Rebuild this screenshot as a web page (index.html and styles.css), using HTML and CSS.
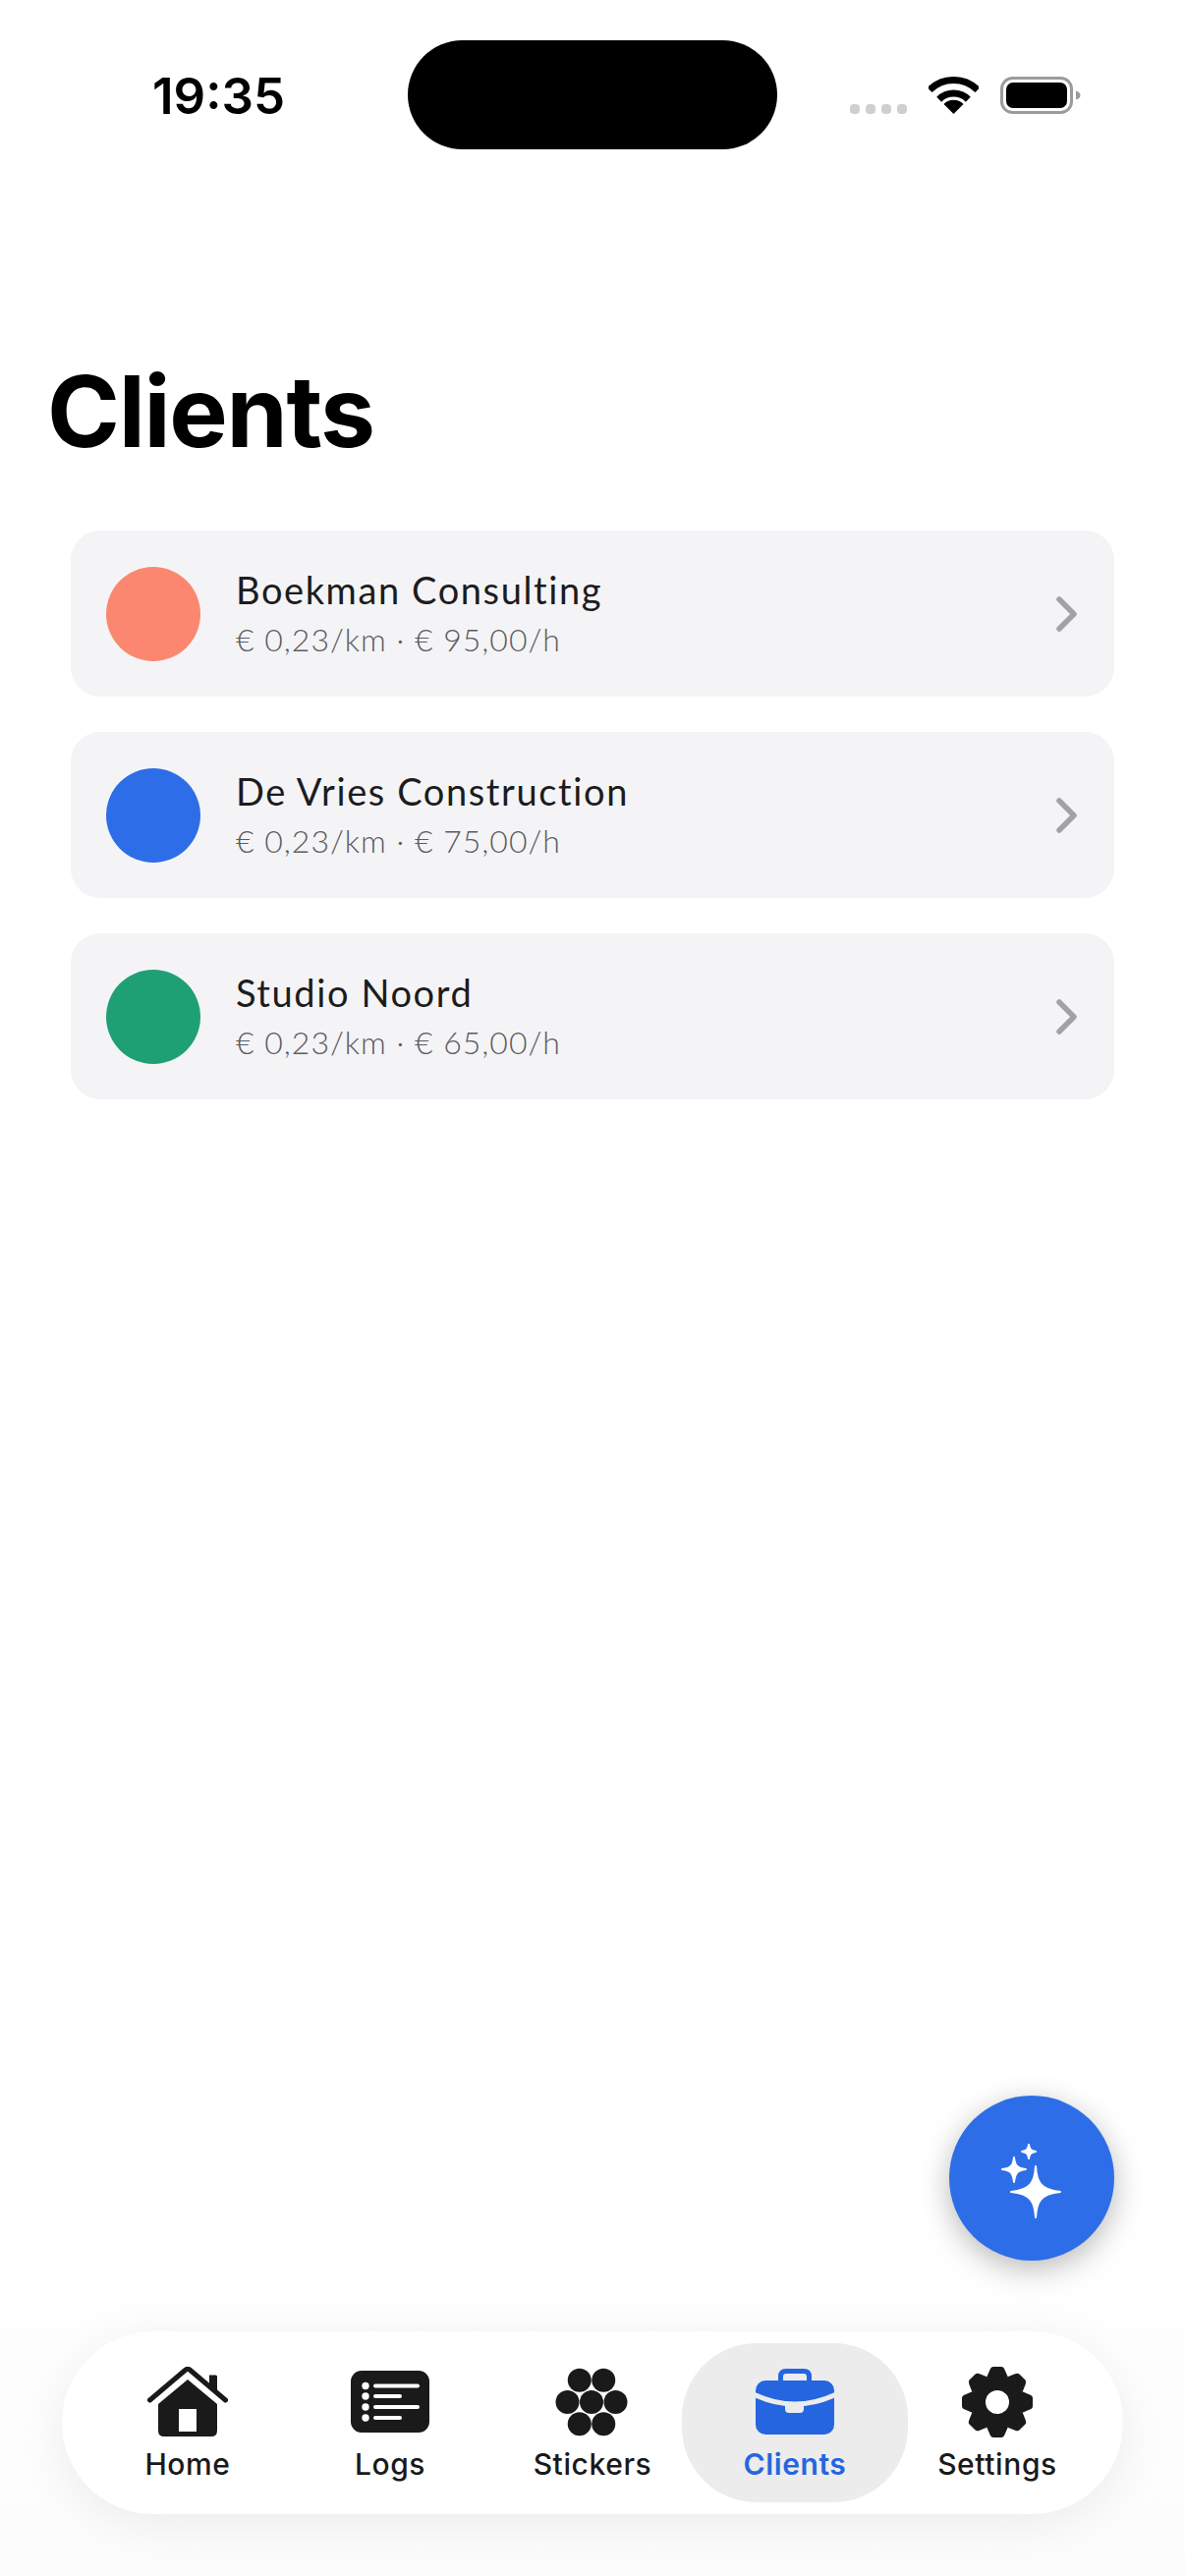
FILE: index.html
```html
<!DOCTYPE html>
<html lang="en">
  <head>
      <meta charset="UTF-8">
      <meta name="viewport" content="width=device-width, initial-scale=1.0">
      <title>Clients</title>
      <link rel="stylesheet" href="styles.css">
  </head>
  <body>
      <div class="phone">
          <header class="status">
              <div class="status-left"><span class="time">19:35</span></div>
              <div class="island"></div>
              <div class="status-right">
                  <div class="dots"><i></i><i></i><i></i><i></i></div>
                  <svg class="wifi" width="51" height="38" viewBox="0 0 51 38">
                      <path d="M1.1 13.6A34.5 34.5 0 0 1 49.9 13.6" fill="none" stroke="#000" stroke-width="7"/>
                      <path d="M10.7 23.2A21 21 0 0 1 40.3 23.2" fill="none" stroke="#000" stroke-width="7"/>
                      <path d="M25.5 38L15.5 28A14 14 0 0 1 35.5 28Z" fill="#000"/>
                  </svg>
                  <svg class="battery" width="82" height="38" viewBox="0 0 82 38">
                      <rect x="1.5" y="1.5" width="71" height="35" rx="11" fill="none" stroke="#9b9b9b" stroke-width="3"/>
                      <rect x="6" y="6" width="62" height="26" rx="7" fill="#000"/>
                      <path d="M77 14.5C80 15.5 81.5 17 81.5 19C81.5 21 80 22.5 77 23.5Z" fill="#9b9b9b"/>
                  </svg>
              </div>
          </header>

          <h1 class="title">Clients</h1>

          <main class="clients">
              <div class="card">
                  <span class="dot dot-coral"></span>
                  <div class="info">
                      <div class="name">Boekman Consulting</div>
                      <div class="rate">€ 0,23/km · € 95,00/h</div>
                  </div>
                  <svg class="chev" width="23" height="38" viewBox="0 0 23 38"><path d="M4 4L19 19L4 34" fill="none" stroke="#a1a1a6" stroke-width="5.5" stroke-linecap="round" stroke-linejoin="round"/></svg>
              </div>
              <div class="card">
                  <span class="dot dot-blue"></span>
                  <div class="info">
                      <div class="name">De Vries Construction</div>
                      <div class="rate">€ 0,23/km · € 75,00/h</div>
                  </div>
                  <svg class="chev" width="23" height="38" viewBox="0 0 23 38"><path d="M4 4L19 19L4 34" fill="none" stroke="#a1a1a6" stroke-width="5.5" stroke-linecap="round" stroke-linejoin="round"/></svg>
              </div>
              <div class="card">
                  <span class="dot dot-green"></span>
                  <div class="info">
                      <div class="name">Studio Noord</div>
                      <div class="rate">€ 0,23/km · € 65,00/h</div>
                  </div>
                  <svg class="chev" width="23" height="38" viewBox="0 0 23 38"><path d="M4 4L19 19L4 34" fill="none" stroke="#a1a1a6" stroke-width="5.5" stroke-linecap="round" stroke-linejoin="round"/></svg>
              </div>
          </main>

          <button class="fab" type="button" aria-label="Assistant">
              <svg width="84" height="84" viewBox="0 0 84 84" fill="#fff" stroke="#fff" stroke-width="2" stroke-linejoin="round">
                  <path d="M46 30C47 45 50 54 71 56C50 58 47 67 46 82C45 67 42 58 21 56C42 54 45 45 46 30Z"/>
                  <path d="M24 21C25 29 27 32 36 33C27 34 25 37 24 46C23 37 21 34 12 33C21 32 23 29 24 21Z"/>
                  <path d="M39 8C39.6 12.5 41 14.3 46 15C41 15.7 39.6 17.5 39 22C38.4 17.5 37 15.7 32 15C37 14.3 38.4 12.5 39 8Z"/>
              </svg>
          </button>

          <nav class="tabbar">
              <a class="tab">
                  <svg width="82" height="72" viewBox="0 0 82 72">
                      <path d="M63 8.5H69.5Q71 8.5 71 10V27L63 20Z" fill="#1a1a1a"/>
                      <path d="M2.5 34L39 3Q41 1.5 43 3L79.5 34" fill="none" stroke="#1a1a1a" stroke-width="5" stroke-linecap="round" stroke-linejoin="round"/>
                      <path fill-rule="evenodd" d="M41 13L71 38V65Q71 71 65 71H17Q11 71 11 65V38ZM32 43V66H50V43Z" fill="#1a1a1a"/>
                  </svg>
                  <span>Home</span>
              </a>
              <a class="tab">
                  <svg width="80" height="64" viewBox="0 0 80 64">
                      <rect width="80" height="63" rx="11" fill="#1a1a1a"/>
                      <g fill="#fff">
                          <circle cx="15" cy="15.5" r="3.7"/>
                          <circle cx="15" cy="26" r="3.7"/>
                          <circle cx="15" cy="37" r="3.7"/>
                          <circle cx="15" cy="48" r="3.7"/>
                      </g>
                      <g stroke="#fff" stroke-width="4" stroke-linecap="round">
                          <path d="M25 15.5H68"/>
                          <path d="M25 26H50"/>
                          <path d="M25 37H68"/>
                          <path d="M25 48H50"/>
                      </g>
                  </svg>
                  <span>Logs</span>
              </a>
              <a class="tab">
                  <svg class="tab-stickers" width="74" height="68" viewBox="0 0 74 68" fill="#1a1a1a">
                      <circle cx="24.75" cy="11.8" r="12"/>
                      <circle cx="49.25" cy="11.8" r="12"/>
                      <circle cx="12.5" cy="34" r="12"/>
                      <circle cx="37" cy="34" r="12"/>
                      <circle cx="61.5" cy="34" r="12"/>
                      <circle cx="24.75" cy="56.2" r="12"/>
                      <circle cx="49.25" cy="56.2" r="12"/>
                  </svg>
                  <span>Stickers</span>
              </a>
              <a class="tab active">
                  <svg width="80" height="68" viewBox="0 0 80 68">
                      <path d="M25.5 13V8Q25.5 2.5 31 2.5H49Q54.5 2.5 54.5 8V13" fill="none" stroke="#2566e0" stroke-width="5"/>
                      <rect y="12" width="80" height="55" rx="10" fill="#2566e0"/>
                      <path d="M-2 26Q40 46 82 26" fill="none" stroke="#ececec" stroke-width="5"/>
                      <rect x="30" y="34" width="19" height="11" rx="4" fill="#ececec"/>
                  </svg>
                  <span>Clients</span>
              </a>
              <a class="tab">
                  <svg width="72" height="72" viewBox="-36 -36 72 72" fill="#1a1a1a">
                      <circle r="27"/>
                      <path d="M-11 -25L-7.5 -33Q-6.5 -36 -4 -36H4Q6.5 -36 7.5 -33L11 -25Z"/>
                      <path transform="rotate(45)" d="M-11 -25L-7.5 -33Q-6.5 -36 -4 -36H4Q6.5 -36 7.5 -33L11 -25Z"/>
                      <path transform="rotate(90)" d="M-11 -25L-7.5 -33Q-6.5 -36 -4 -36H4Q6.5 -36 7.5 -33L11 -25Z"/>
                      <path transform="rotate(135)" d="M-11 -25L-7.5 -33Q-6.5 -36 -4 -36H4Q6.5 -36 7.5 -33L11 -25Z"/>
                      <path transform="rotate(180)" d="M-11 -25L-7.5 -33Q-6.5 -36 -4 -36H4Q6.5 -36 7.5 -33L11 -25Z"/>
                      <path transform="rotate(225)" d="M-11 -25L-7.5 -33Q-6.5 -36 -4 -36H4Q6.5 -36 7.5 -33L11 -25Z"/>
                      <path transform="rotate(270)" d="M-11 -25L-7.5 -33Q-6.5 -36 -4 -36H4Q6.5 -36 7.5 -33L11 -25Z"/>
                      <path transform="rotate(315)" d="M-11 -25L-7.5 -33Q-6.5 -36 -4 -36H4Q6.5 -36 7.5 -33L11 -25Z"/>
                      <circle r="12" fill="#fff"/>
                  </svg>
                  <span>Settings</span>
              </a>
          </nav>
      </div>
  </body>
</html>
```

FILE: styles.css
```css
* {
    box-sizing: border-box;
}
body {
    margin: 0;
    background: #fff;
    font-family: Inter, "Liberation Sans", sans-serif;
}
.phone {
    width: 1206px;
    height: 2622px;
    display: flex;
    flex-direction: column;
    overflow: hidden;
    background: linear-gradient(#fff 85%, #fcfcfc);
}

/* status bar */
.status {
    display: flex;
    align-items: center;
    padding-top: 41px;
}
.status-left {
    width: 415px;
    padding: 2px 0 0 155px;
}
.time {
    font-size: 51px;
    font-weight: 600;
    color: #000;
}
.island {
    width: 376px;
    height: 111px;
    border-radius: 56px;
    background: #000;
}
.status-right {
    display: flex;
    align-items: flex-end;
    margin-left: 74px;
}
.dots {
    display: flex;
    gap: 6px;
}
.dots i {
    width: 10px;
    height: 10px;
    border-radius: 4px;
    background: #cfcfcf;
}
.wifi {
    margin-left: 22px;
}
.battery {
    margin-left: 22px;
}

/* heading */
.title {
    margin: 207px 0 0 48px;
    font-size: 100px;
    line-height: 120px;
    font-weight: 700;
    letter-spacing: -1.3px;
    color: #000;
}

/* client list */
.clients {
    flex: 1;
    display: flex;
    flex-direction: column;
    gap: 36px;
    margin: 61px 72px 0;
}
.card {
    height: 169px;
    display: flex;
    align-items: center;
    padding: 0 37px 0 36px;
    border-radius: 30px;
    background: #f4f4f6;
}
.dot {
    width: 96px;
    height: 96px;
    border-radius: 50%;
    flex-shrink: 0;
}
.dot-coral { background: #fc8770; }
.dot-blue { background: #2d6ee8; }
.dot-green { background: #1f9f74; }
.info {
    flex: 1;
    margin-left: 36px;
    padding-bottom: 2px;
    font-family: Lato, sans-serif;
}
.name {
    font-size: 38px;
    line-height: 46px;
    letter-spacing: 1.6px;
    color: #1c1c1e;
}
.rate {
    margin-top: 8px;
    font-size: 32px;
    line-height: 40px;
    font-weight: 300;
    letter-spacing: 1px;
    color: #5c5c61;
}

/* round action button */
.fab {
    align-self: flex-end;
    width: 168px;
    height: 168px;
    margin: 0 72px 72px 0;
    padding: 0;
    border: 0;
    border-radius: 50%;
    background: #2d6ee8;
    box-shadow: 0 8px 30px rgba(0, 0, 0, 0.28);
    display: flex;
    align-items: center;
    justify-content: center;
}

/* bottom tabs */
.tabbar {
    display: grid;
    grid-template-columns: repeat(5, 206px);
    justify-content: center;
    width: 1080px;
    height: 186px;
    margin: 0 0 63px 63px;
    padding: 12px 0;
    border-radius: 93px;
    background: #fff;
    box-shadow: 0 10px 50px rgba(0, 0, 0, 0.07);
}
.tab {
    display: flex;
    flex-direction: column;
    align-items: center;
    justify-content: flex-start;
    color: #1a1a1a;
}
.tab svg {
    height: 72px;
    margin-top: 24px;
}
.tab .tab-stickers {
    margin-right: 2px;
}
.tab span {
    margin-top: 9px;
    font-size: 30px;
    line-height: 36px;
    font-weight: 500;
    letter-spacing: 0.6px;
}
.tab.active {
    margin: 0 -12px;
    border-radius: 76px;
    background: #ececec;
    color: #2566e0;
}
.tab.active span {
    font-weight: 600;
}
```
